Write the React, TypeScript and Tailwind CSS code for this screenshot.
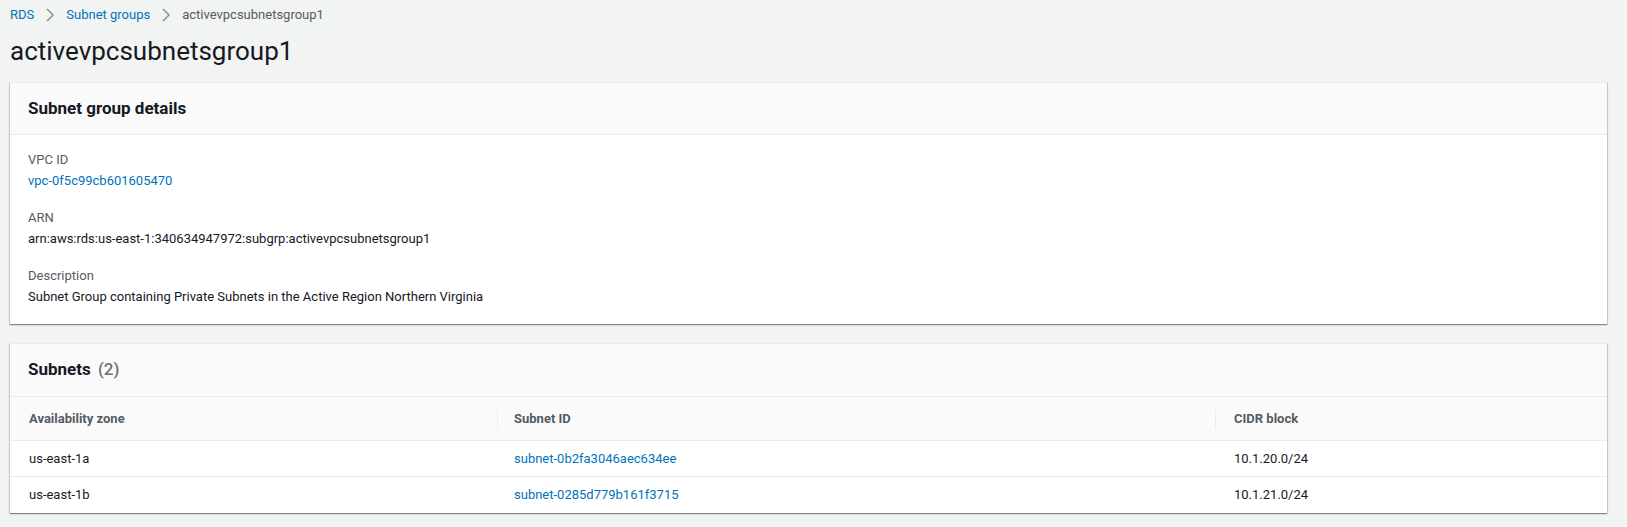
import React from "react";

const font = { fontFamily: "Roboto, 'Noto Sans', Arial, sans-serif" };

function Chevron() {
  return (
    <svg width="16" height="16" viewBox="0 0 16 16" className="mx-[8px]">
      <polyline points="5,2 11,8 5,14" fill="none" stroke="#879596" strokeWidth="1.5" />
    </svg>
  );
}

const cardShadow =
  "bg-white shadow-[0_1px_1px_0_rgba(0,28,36,0.3),1px_1px_1px_0_rgba(0,28,36,0.15),-1px_1px_1px_0_rgba(0,28,36,0.15)] border-t border-[#eaeded]";

export default function App() {
  const rows = [
    { az: "us-east-1a", id: "subnet-0b2fa3046aec634ee", cidr: "10.1.20.0/24" },
    { az: "us-east-1b", id: "subnet-0285d779b161f3715", cidr: "10.1.21.0/24" },
  ];
  return (
    <div className="min-h-screen bg-[#f2f3f3] pl-[10px] pr-[20px] text-[#16191f]" style={font}>
      <nav className="h-[30px] flex items-center text-[13px]">
        <span className="text-[#0073bb]">RDS</span>
        <Chevron />
        <span className="text-[#0073bb]">Subnet groups</span>
        <Chevron />
        <span className="text-[#545b64]">activevpcsubnetsgroup1</span>
      </nav>
      <h1 className="mt-[3px] mb-[13px] text-[26px] leading-[36px] font-normal text-[#16191f]">
        activevpcsubnetsgroup1
      </h1>

      <section className={cardShadow}>
        <div className="h-[52px] bg-[#fafafa] border-b border-[#eaeded] px-[18px] flex items-center">
          <h2 className="text-[17px] font-bold">Subnet group details</h2>
        </div>
        <div className="px-[18px] pt-[15px] pb-[16px] flex flex-col gap-[16px] text-[13px]">
          <div>
            <div className="leading-[20px] text-[#545b64]">VPC ID</div>
            <div className="leading-[22px] text-[#0073bb]">vpc-0f5c99cb601605470</div>
          </div>
          <div>
            <div className="leading-[20px] text-[#545b64]">ARN</div>
            <div className="leading-[22px]">arn:aws:rds:us-east-1:340634947972:subgrp:activevpcsubnetsgroup1</div>
          </div>
          <div>
            <div className="leading-[20px] text-[#545b64]">Description</div>
            <div className="leading-[22px]">Subnet Group containing Private Subnets in the Active Region Northern Virginia</div>
          </div>
        </div>
      </section>

      <section className={cardShadow + " mt-[19px]"}>
        <div className="h-[53px] bg-[#fafafa] border-b border-[#eaeded] px-[18px] flex items-center">
          <h2 className="text-[17px] font-bold">
            Subnets <span className="ml-[3px] font-medium text-[#687078]">(2)</span>
          </h2>
        </div>
        <div className="grid grid-cols-[487px_718px_1fr] text-[13px]">
          <div className="h-[44px] bg-[#fafafa] border-b border-[#eaeded] flex items-center pl-[19px] font-bold text-[#545b64]">
            Availability zone
          </div>
          <div className="h-[44px] bg-[#fafafa] border-b border-[#eaeded] flex items-center font-bold text-[#545b64]">
            <span className="h-[20px] border-l border-[#eaeded] mr-[16px]" />
            Subnet ID
          </div>
          <div className="h-[44px] bg-[#fafafa] border-b border-[#eaeded] flex items-center font-bold text-[#545b64]">
            <span className="h-[20px] border-l border-[#eaeded] mr-[18px]" />
            CIDR block
          </div>
          {rows.map((r, i) => (
            <React.Fragment key={r.id}>
              <div className={"h-[36px] flex items-center pl-[19px] " + (i === 0 ? "border-b border-[#eaeded]" : "")}>
                {r.az}
              </div>
              <div className={"h-[36px] flex items-center pl-[17px] text-[#0073bb] " + (i === 0 ? "border-b border-[#eaeded]" : "")}>
                {r.id}
              </div>
              <div className={"h-[36px] flex items-center pl-[19px] " + (i === 0 ? "border-b border-[#eaeded]" : "")}>
                {r.cidr}
              </div>
            </React.Fragment>
          ))}
        </div>
      </section>
    </div>
  );
}
